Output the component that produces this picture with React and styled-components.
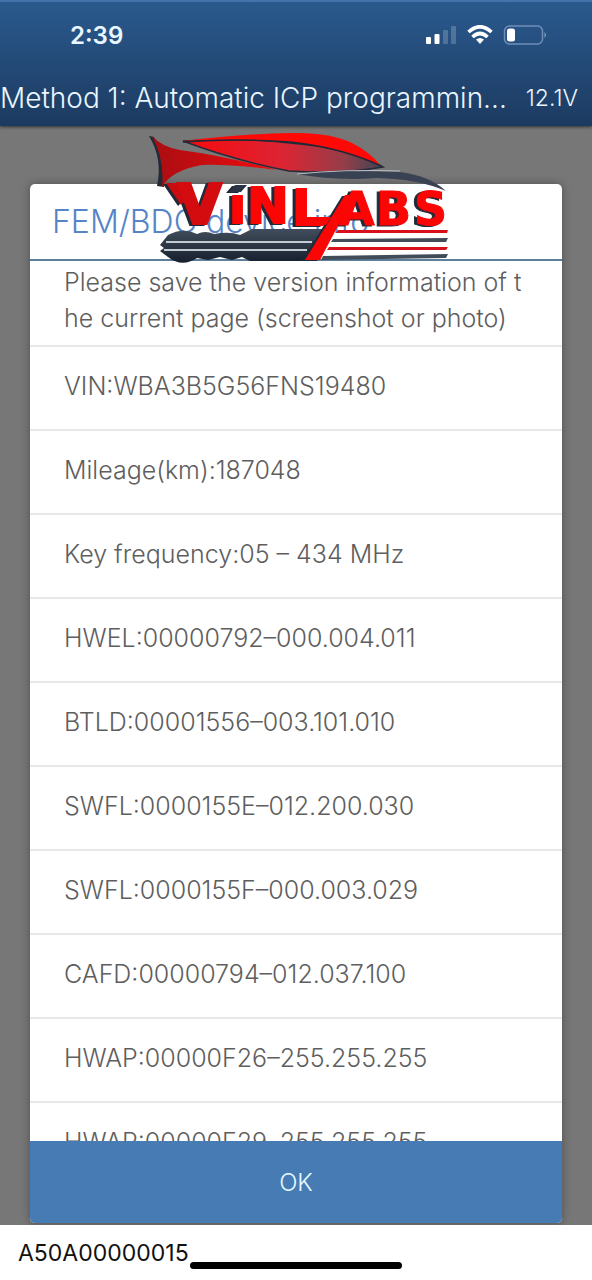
import React from "react";
import styled, { createGlobalStyle } from "styled-components";

const GlobalStyle = createGlobalStyle`
  * { box-sizing: border-box; }
  body { margin: 0; background: #fff; font-family: Inter, "Liberation Sans", sans-serif; }
`;

const Screen = styled.div`
  display: flex;
  flex-direction: column;
  height: 100vh;
`;

const Header = styled.header`
  position: relative;
  z-index: 1;
  flex: none;
  color: #eaf6ff;
  background: linear-gradient(#2a5a8e, #1c3a60);
  border-top: 2px solid #4373ab;
  box-shadow: 0 1px 3px rgba(0, 0, 0, 0.6);
`;

const StatusBar = styled.div`
  display: flex;
  align-items: center;
  justify-content: space-between;
  height: 68px;
  padding: 0 45px 0 70px;
`;

const Clock = styled.time`
  font-size: 24px;
  font-weight: 600;
  line-height: 28px;
`;

const StatusIcons = styled.svg`
  width: 121px;
  height: 22px;
`;

const TitleBar = styled.div`
  display: flex;
  align-items: center;
  justify-content: space-between;
  height: 56px;
  padding-right: 14px;
`;

const PageTitle = styled.h1`
  margin: 0;
  font-size: 28px;
  font-weight: 300;
  line-height: 36px;
  white-space: nowrap;
`;

const Voltage = styled.span`
  font-size: 23px;
  font-weight: 300;
  line-height: 36px;
`;

const Stage = styled.main`
  position: relative;
  flex: 1;
  min-height: 0;
  display: flex;
  padding: 58px 30px 2px;
  background: #777;
`;

const Dialog = styled.section`
  flex: 1;
  min-width: 0;
  display: flex;
  flex-direction: column;
  overflow: hidden;
  border-radius: 5px;
  background: #fff;
  box-shadow: 0 0 8px rgba(0, 0, 0, 0.35);
`;

const DialogTitle = styled.h2`
  flex: none;
  margin: 0;
  padding: 0 22px;
  height: 77px;
  color: #5585c6;
  font-size: 32px;
  font-weight: 300;
  line-height: 76px;
  border-bottom: 2px solid #5d7f99;
  white-space: nowrap;
`;

const InfoList = styled.ul`
  flex: 1;
  min-height: 0;
  overflow: hidden;
  margin: 0;
  padding: 0;
  list-style: none;
`;

const InfoRow = styled.li`
  display: flex;
  align-items: center;
  height: ${(p) => (p.$note ? 86 : 84)}px;
  padding: ${(p) => (p.$note ? "0 34px 7px" : "0 34px 4px")};
  border-bottom: 2px solid #e8e8e8;
  color: #5e5e5e;
  font-size: 25px;
  font-weight: 300;
  line-height: 36px;
  white-space: pre;
`;

const ConfirmButton = styled.button`
  flex: none;
  height: 82px;
  border: 0;
  background: #477bb3;
  color: #e6f8ff;
  font-family: inherit;
  font-size: 24px;
  font-weight: 300;
`;

const Footer = styled.footer`
  position: relative;
  flex: none;
  height: 55px;
  padding: 0 18px;
  background: #fff;
  color: #111;
  font-size: 23px;
  line-height: 56px;
`;

const HomeIndicator = styled.div`
  position: absolute;
  left: 50%;
  bottom: 11px;
  width: 212px;
  height: 7px;
  border-radius: 4px;
  background: #000;
  transform: translateX(-50%);
`;

const Watermark = styled.svg`
  position: absolute;
  top: 2px;
  left: 50%;
  width: 310px;
  height: 140px;
  transform: translateX(-50%);
  pointer-events: none;
`;

const Lettering = styled.g`
  fill: #fb0505;
  stroke: #fb0505;
  font-family: "DejaVu Sans", sans-serif;
  font-weight: 700;
  filter: drop-shadow(-3px 1px 0 #202938);
`;

const rows = [
  "Please save the version information of t\nhe current page (screenshot or photo)",
  "VIN:WBA3B5G56FNS19480",
  "Mileage(km):187048",
  "Key frequency:05 – 434 MHz",
  "HWEL:00000792–000.004.011",
  "BTLD:00001556–003.101.010",
  "SWFL:0000155E–012.200.030",
  "SWFL:0000155F–000.003.029",
  "CAFD:00000794–012.037.100",
  "HWAP:00000F26–255.255.255",
  "HWAP:00000F29–255.255.255",
];

function DeviceStatus() {
  return (
    <StatusIcons viewBox="0 0 121 22" aria-label="Signal, Wi-Fi and battery">
      <g fill="#fff">
        <rect x="0" y="12" width="5" height="7" rx="1" />
        <rect x="8.500" y="9" width="5" height="10" rx="1" />
        <rect x="17" y="5" width="5" height="14" rx="1" opacity="0.2" />
        <rect x="25" y="1" width="5" height="18" rx="1" opacity="0.2" />
      </g>
      <g fill="none" stroke="#fff" strokeWidth="3.6">
        <path d="M42.500 7 Q54 -3.500 65.500 7" />
        <path d="M46.500 12 Q54 5 61.500 12" />
      </g>
      <path d="M50 14.500 Q54 11.500 58 14.500 L54 19Z" fill="#fff" />
      <rect x="78.500" y="1" width="38" height="18" rx="5" fill="none" stroke="#6f8fb8" strokeWidth="1.500" />
      <rect x="81" y="3.500" width="8" height="13" rx="2.500" fill="#fff" />
      <path d="M118.500 7 Q121.500 10 118.500 13Z" fill="#849fc0" />
    </StatusIcons>
  );
}

function BrandMark() {
  return (
    <Watermark viewBox="141 128 310 140" aria-label="VINLABS">
      <defs>
        <linearGradient id="fin" x1="0" x2="1">
          <stop offset="0" stopColor="#a90e12" />
          <stop offset="1" stopColor="#f20b0f" />
        </linearGradient>
        <linearGradient id="glass" x1="0" x2="1">
          <stop offset="0" stopColor="#f80a0d" />
          <stop offset="0.5" stopColor="#dc2433" />
          <stop offset="0.8" stopColor="#963d48" />
          <stop offset="1" stopColor="#3d4654" />
        </linearGradient>
        <linearGradient id="steel" x1="0" x2="0" y1="0" y2="1">
          <stop offset="0" stopColor="#414d5c" />
          <stop offset="1" stopColor="#171f2e" />
        </linearGradient>
      </defs>

      <path d="M149 136 Q163 159 157 186 L164 187 Q163 156 154 137Z" fill="#222a36" />
      <path d="M152 136 Q162 147 180 150 Q225 156 277 170 Q230 164 202 165 Q172 170 162 187 Q165 160 152 136Z" fill="url(#fin)" />
      <path d="M183 141 Q245 137 290 143 Q350 148 383 167 Q345 174 289 171 Q233 160 183 141Z" fill="url(#glass)" stroke="#252b38" strokeWidth="1.500" />
      <path d="M183 141 Q240 134 290 133 Q330 132 352 143 Q370 152 381 166 Q340 147 290 142 Q240 138 183 141Z" fill="#ff0907" />
      <path d="M183 142 Q240 138 290 142 Q340 147 381 166" fill="none" stroke="#222735" strokeWidth="1.500" />
      <path d="M297 174 Q345 170 400 172 Q430 176 446 191 Q418 179 377 178 Q335 181 297 174Z" fill="#384252" />
      <path d="M297 174 Q345 169 400 171" fill="none" stroke="#b9bec5" strokeWidth="1" />

      <path d="M160 245 L168 235 Q183 227 197 234 Q205 230 214 234 Q230 231 240 235 L252 229 H324 L304 261 H250 L242 257 L232 260 L220 257 L208 260 L197 258 Q182 268 168 257 L160 251 L164 248Z" fill="url(#steel)" />
      <path d="M166 242 H312 M164 250 H307" stroke="#c3ccd2" strokeWidth="2" />

      <path d="M338 230 H448 L447 233 H336Z M329 247 H448 L446 250 H327Z" fill="#d9101b" />
      <path d="M333 239 L448 238 L446 242 H331Z M323 256 L448 254 L446 258 L321 260Z" fill="#414c59" />

      <Lettering>
        <path d="M345 195 L354 195 L340 222 L320 260 H305Z" stroke="none" />
        <path d="M166 183 H188 L190 196 L181 205Z" fill="#c80c0f" stroke="none" />
        <path d="M318 217 H331 L326 225 H318Z" stroke="none" />
        <text y="223" fontSize="54" strokeWidth="4" fill="#d40c0f" stroke="#d40c0f">
          <tspan x="179">V</tspan>
        </text>
        <text y="223" fontSize="50" strokeWidth="2">
          <tspan x="229">ı</tspan>
          <tspan x="247">N</tspan>
        </text>
        <text y="225" fontSize="50" strokeWidth="2">
          <tspan x="292">L</tspan>
        </text>
        <text y="225" fontSize="46" strokeWidth="1">
          <tspan x="339">A</tspan>
          <tspan x="376">B</tspan>
          <tspan x="414">S</tspan>
        </text>
        <path d="M235 185 H247 L241 192 H229Z" fill="#2b3443" stroke="none" />
      </Lettering>
    </Watermark>
  );
}

export default function App() {
  return (
    <Screen>
      <GlobalStyle />
      <Header>
        <StatusBar>
          <Clock>2:39</Clock>
          <DeviceStatus />
        </StatusBar>
        <TitleBar>
          <PageTitle>Method 1: Automatic ICP programmin...</PageTitle>
          <Voltage>12.1V</Voltage>
        </TitleBar>
      </Header>
      <Stage>
        <Dialog role="dialog" aria-labelledby="dialog-title">
          <DialogTitle id="dialog-title">FEM/BDC device info</DialogTitle>
          <InfoList>
            {rows.map((row, index) => (
              <InfoRow key={row} $note={index === 0}>
                {row}
              </InfoRow>
            ))}
          </InfoList>
          <ConfirmButton type="button">OK</ConfirmButton>
        </Dialog>
        <BrandMark />
      </Stage>
      <Footer>
        A50A00000015
        <HomeIndicator />
      </Footer>
    </Screen>
  );
}
